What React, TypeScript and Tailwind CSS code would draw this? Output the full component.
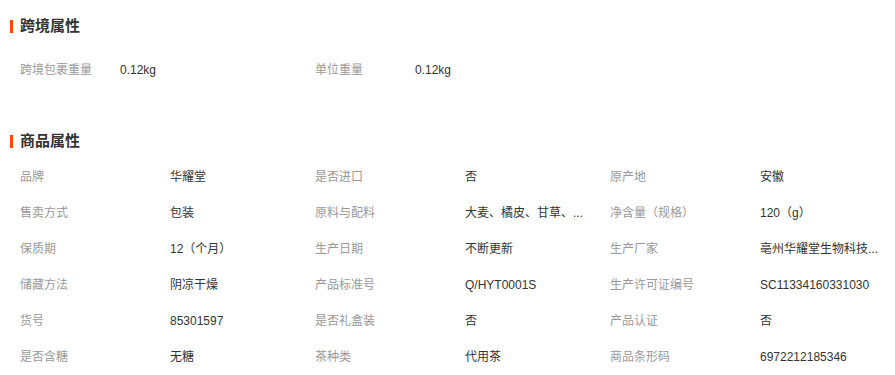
const crossBorder = [
  ["跨境包裹重量", "0.12kg"],
  ["单位重量", "0.12kg"],
];

const props: [string, string][] = [
  ["品牌", "华耀堂"],
  ["是否进口", "否"],
  ["原产地", "安徽"],
  ["售卖方式", "包装"],
  ["原料与配料", "大麦、橘皮、甘草、..."],
  ["净含量（规格）", "120（g）"],
  ["保质期", "12（个月）"],
  ["生产日期", "不断更新"],
  ["生产厂家", "亳州华耀堂生物科技..."],
  ["储藏方法", "阴凉干燥"],
  ["产品标准号", "Q/HYT0001S"],
  ["生产许可证编号", "SC11334160331030"],
  ["货号", "85301597"],
  ["是否礼盒装", "否"],
  ["产品认证", "否"],
  ["是否含糖", "无糖"],
  ["茶种类", "代用茶"],
  ["商品条形码", "6972212185346"],
];

function Title({ text }: { text: string }) {
  return (
    <div className="flex items-center h-[20px]">
      <div className="w-[3px] h-[13px] bg-[#ff4a00]" />
      <h2 className="ml-[7px] text-[15px] font-bold text-[#333] leading-[20px]">
        {text}
      </h2>
    </div>
  );
}

export default function App() {
  return (
    <div
      className="w-[895px] h-[375px] bg-white pl-[10px] pt-[16px] overflow-hidden"
      style={{ fontFamily: '"Liberation Sans", "Noto Sans CJK SC", sans-serif' }}
    >
      <Title text="跨境属性" />
      <div className="mt-[16px] pl-[10px] grid grid-cols-[295px_295px] text-[12px]">
        {crossBorder.map(([label, value]) => (
          <div key={label} className="flex items-center h-[36px]">
            <div className="w-[100px] text-[#999]">{label}</div>
            <div className="text-[#333]">{value}</div>
          </div>
        ))}
      </div>

      <div className="mt-[43px]">
        <Title text="商品属性" />
      </div>
      <div className="mt-[8px] pl-[10px] grid grid-cols-[295px_295px_295px] text-[12px]">
        {props.map(([label, value]) => (
          <div key={label} className="flex items-center h-[36px]">
            <div className="w-[150px] text-[#999] shrink-0">{label}</div>
            <div className="text-[#333] whitespace-nowrap">{value}</div>
          </div>
        ))}
      </div>
    </div>
  );
}
